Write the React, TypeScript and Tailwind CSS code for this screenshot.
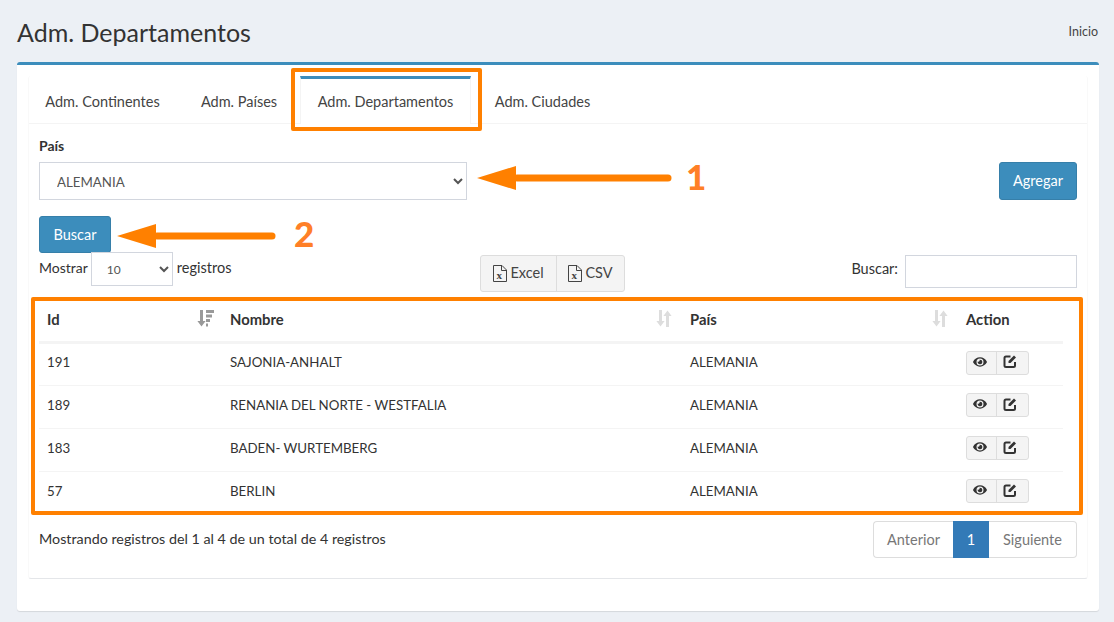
import { FaEye } from 'react-icons/fa';

const ROWS = [
  { id: 191, nombre: 'SAJONIA-ANHALT' },
  { id: 189, nombre: 'RENANIA DEL NORTE - WESTFALIA' },
  { id: 183, nombre: 'BADEN- WURTEMBERG' },
  { id: 57, nombre: 'BERLIN' },
];

function SortIcon({ active = false }: { active?: boolean }) {
  if (active) {
    return (
      <svg width="17" height="17" viewBox="0 0 17 17" className="text-[#999]" fill="currentColor">
        <path d="M3 0h3v11h2.6L4.5 16.5.4 11H3z" />
        <path d="M9 0h8v3H9zM9 4.5h6v3H9zM9 9h4v3H9zM9 13.5h2v3H9z" />
      </svg>
    );
  }
  return (
    <svg width="16" height="17" viewBox="0 0 16 17" className="text-[#ddd] mr-[2px]" fill="currentColor">
      <path d="M3 0h3v11h2.6L4.5 16.5.4 11H3z" />
      <path d="M10 17h3V6h2.6L11.5.5 7.4 6H10z" />
    </svg>
  );
}

function FileIcon() {
  return (
    <svg width="14" height="17" viewBox="0 0 14 17" fill="none" className="text-[#444]">
      <path d="M.5.5h8.5l4.5 4.5v11.5H.5z" stroke="currentColor" />
      <path d="M8.5.5v5h5" stroke="currentColor" />
      <text x="3.5" y="14" fontSize="11" fontFamily="Liberation Serif, serif" fontWeight="700" fill="currentColor">x</text>
    </svg>
  );
}

function EditIcon() {
  return (
    <svg width="14" height="14" viewBox="0 0 14 14" fill="none" className="text-[#333]">
      <path d="M7.5 2.5H3A1.5 1.5 0 0 0 1.5 4v7.5A1.5 1.5 0 0 0 3 13h7.5a1.5 1.5 0 0 0 1.5-1.5V8" stroke="currentColor" strokeWidth="2" />
      <path d="M5.5 7 11 1.5l2 2L7.5 9h-2z" fill="currentColor" />
    </svg>
  );
}

function Arrow({ width }: { width: number }) {
  return (
    <svg width={width} height="26" viewBox={`0 0 ${width} 26`} fill="none">
      <path d={`M40 13H${width - 4}`} stroke="#ff8000" strokeWidth="7" strokeLinecap="round" />
      <path d="M0 13 39 1v24z" fill="#ff8000" />
    </svg>
  );
}

export default function App() {
  return (
    <div className="w-[1114px] h-[622px] overflow-hidden bg-[#ecf0f5] text-[#333] text-[14.5px] font-['Lato','Liberation_Sans',sans-serif]">
      {/* Header */}
      <div className="flex items-center justify-between h-[62px] pl-[17px] pr-[16px]">
        <h1 className="text-[25px] leading-[30px] mt-[1px]">Adm. Departamentos</h1>
        <span className="text-[12.5px] text-[#444] mt-[2px]">Inicio</span>
      </div>

      {/* Card */}
      <div className="ml-[17px] mr-[15px] h-[549px] bg-white border-t-[3px] border-[#3c8dbc] rounded-[3px] shadow-[0_1px_1px_rgba(0,0,0,0.1)] px-[11px] pt-[11px]">
        <div className="h-[503px] border-x border-x-[#f9f9f9] border-b border-b-[#e4e6e9] rounded-[3px] px-[10px] relative">
          {/* Tabs */}
          <div className="flex h-[48px] -mx-[10px] border-b border-[#f4f4f4] text-[#444]">
            <div className="w-[147px] flex items-center justify-center pt-[5px]">Adm. Continentes</div>
            <div className="w-[112px] ml-[7px] flex items-center justify-center pt-[5px]">Adm. Países</div>
            <div className="w-[171px] ml-[5px] flex items-center justify-center border-t-[3px] border-x border-x-[#f4f4f4] border-t-[#3c8dbc] bg-white h-[48px]">
              Adm. Departamentos
            </div>
            <div className="w-[133px] ml-[5px] flex items-center justify-center pt-[5px]">Adm. Ciudades</div>
          </div>

          {/* Filter */}
          <div className="flex justify-between items-end pt-[12px]">
            <div>
              <label className="block font-bold text-[14px] leading-[20px] mb-[6px]">País</label>
              <select className="block w-[428px] h-[38px] bg-white border border-[#d2d6de] pl-[13px] pr-[6px] pt-[1px] text-[13.3px] text-[#555] outline-none">
                <option>ALEMANIA</option>
              </select>
            </div>
            <button className="w-[78px] h-[38px] bg-[#3c8dbc] border border-[#367fa9] rounded-[3px] text-white">Agregar</button>
          </div>

          <button className="mt-[16px] block w-[72px] h-[37px] bg-[#3c8dbc] border border-[#367fa9] rounded-[3px] text-white">Buscar</button>

          {/* Toolbar */}
          <div className="flex items-start -mt-[1px] h-[45px]">
            <div className="w-[441px] flex items-start">
              <span className="leading-[20px] mt-[6px] text-[14px]">Mostrar</span>
              <select className="ml-[3px] w-[82px] h-[34px] bg-white border border-[#d2d6de] pl-[11px] text-[12px] text-[#555] outline-none">
                <option>10</option>
              </select>
              <span className="ml-[4px] leading-[20px] mt-[6px] text-[14.5px]">registros</span>
            </div>
            <div className="flex mt-[3px] h-[37px] border border-[#ddd] rounded-[3px] bg-[#f4f4f4] text-[#444] text-[14.5px]">
              <div className="w-[76px] flex items-center justify-center gap-[3px] border-r border-[#ddd] pb-[1px]">
                <FileIcon /> Excel
              </div>
              <div className="w-[67px] flex items-center justify-center gap-[3px] pb-[1px]">
                <FileIcon /> CSV
              </div>
            </div>
            <div className="ml-auto flex items-start mt-[3px]">
              <span className="leading-[20px] mt-[4px] mr-[7px] text-[14.5px]">Buscar:</span>
              <input className="w-[172px] h-[33px] border border-[#d2d6de] bg-white outline-none" />
            </div>
          </div>

          {/* Table */}
          <div className="relative">
            <table className="w-[1024px] table-fixed border-collapse text-[14.8px]">
              <thead>
                <tr className="h-[45px] border-b-[3px] border-[#f4f4f4] font-bold">
                  <th className="w-[183px] text-left px-[8px]">
                    <div className="flex items-center justify-between">Id <SortIcon active /></div>
                  </th>
                  <th className="w-[460px] text-left px-[8px]">
                    <div className="flex items-center justify-between">Nombre <SortIcon /></div>
                  </th>
                  <th className="w-[276px] text-left px-[8px]">
                    <div className="flex items-center justify-between">País <SortIcon /></div>
                  </th>
                  <th className="text-left pl-[8px]">Action</th>
                </tr>
              </thead>
              <tbody>
                {ROWS.map((row) => (
                  <tr key={row.id} className="h-[43px] border-b border-[#f4f4f4] text-[13.3px]">
                    <td className="pl-[8px] pb-[2px]">{row.id}</td>
                    <td className="pl-[8px] pb-[2px]">{row.nombre}</td>
                    <td className="pl-[8px] pb-[2px]">ALEMANIA</td>
                    <td className="pl-[8px] pb-[3px]">
                      <div className="flex w-[63px] h-[24px] border border-[#ddd] rounded-[3px] bg-[#f4f4f4] text-[#333]">
                        <div className="w-[30px] flex items-center justify-center border-r border-[#ddd] pb-[2px] pr-[3px]">
                          <FaEye className="text-[14px]" />
                        </div>
                        <div className="w-[31px] flex items-center justify-center pb-[3px] pr-[6px]">
                          <EditIcon />
                        </div>
                      </div>
                    </td>
                  </tr>
                ))}
              </tbody>
            </table>
            {/* Orange annotation around the table */}
            <div className="absolute -left-[8px] top-0 w-[1052px] h-[218px] border-[4px] border-[#ff8000] rounded-[2px] pointer-events-none" />
          </div>

          {/* Footer */}
          <div className="flex items-start justify-between mt-[6px]">
            <span className="leading-[20px] mt-[8px] text-[14.3px]">Mostrando registros del 1 al 4 de un total de 4 registros</span>
            <div className="flex h-[37px] text-[#777] text-[14.5px]">
              <div className="w-[80px] flex items-center justify-center border border-r-0 border-[#ddd] rounded-l-[4px] pt-[1px]">Anterior</div>
              <div className="w-[36px] flex items-center justify-center bg-[#337ab7] text-white pt-[1px]">1</div>
              <div className="w-[88px] flex items-center justify-center border border-l-0 border-[#ddd] rounded-r-[4px] pt-[1px]">Siguiente</div>
            </div>
          </div>

          {/* Orange annotations */}
          <div className="absolute left-[262px] -top-[8px] w-[191px] h-[63px] border-[4px] border-[#ff8000] rounded-[2px] pointer-events-none" />
          <div className="absolute left-[448px] top-[89px]"><Arrow width={195} /></div>
          <div className="absolute left-[657px] top-[80px] text-[35px] leading-[40px] font-black text-[#ff7f27]">1</div>
          <div className="absolute left-[88px] top-[147px]"><Arrow width={159} /></div>
          <div className="absolute left-[265px] top-[137px] text-[35px] leading-[40px] font-black text-[#ff7f27]">2</div>
        </div>
      </div>
    </div>
  );
}
